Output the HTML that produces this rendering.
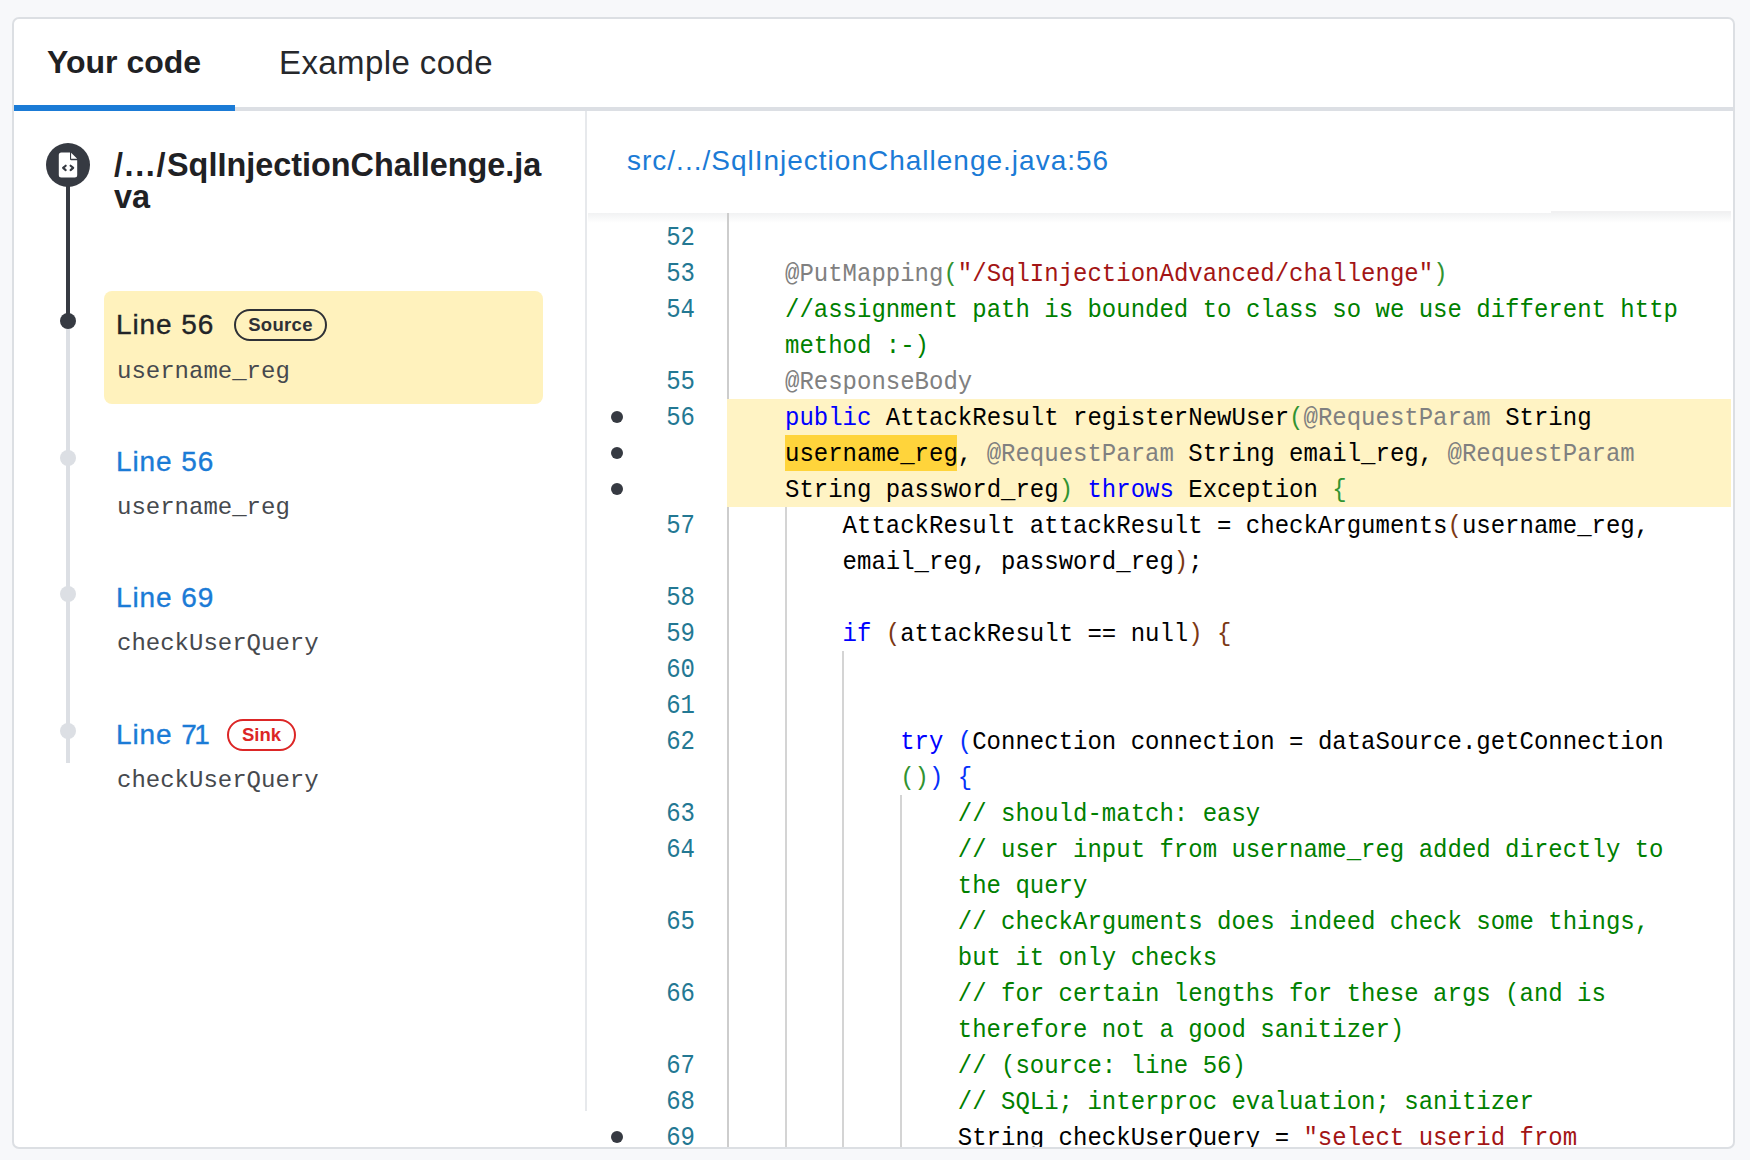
<!DOCTYPE html>
<html><head><meta charset="utf-8">
<style>
html,body{margin:0;padding:0;}
body{width:1750px;height:1160px;background:#f7f8fa;position:relative;overflow:hidden;font-family:"Liberation Sans",sans-serif;}
.card{position:absolute;left:12px;top:17px;width:1719px;height:1128px;border:2px solid #dcdfe3;border-radius:7px;background:#fff;overflow:hidden;}
.abs{position:absolute;white-space:pre;}
.tab1{left:33px;top:23px;font-size:32px;font-weight:700;color:#1f2124;line-height:40px;}
.tab2{left:265px;top:24px;font-size:33px;letter-spacing:0.4px;font-weight:400;color:#26282c;line-height:40px;}
.tabline{left:0;top:88px;width:1719px;height:4px;background:#dcdfe4;}
.tabact{left:0;top:86px;width:221px;height:6px;background:#1b7bd6;}
.divl{left:571px;top:92px;width:2px;height:1000px;background:#e7e9ec;}
.mono{font-family:"Liberation Mono",monospace;}
.ficon{left:32px;top:124px;width:44px;height:44px;border-radius:50%;background:#363a42;}
.vdark{left:52px;top:160px;width:4px;height:142px;background:#363a42;}
.vlight{left:52px;top:302px;width:4px;height:442px;background:#dcdfe4;}
.tdot{left:46px;width:16px;height:16px;border-radius:50%;}
.ftitle{left:100px;top:131px;font-size:32.4px;font-weight:700;color:#1f2124;line-height:31.5px;}
.ycard{left:90px;top:272px;width:439px;height:113px;border-radius:8px;background:#fff2bd;}
.lnk{left:102px;margin-top:1px;font-size:28px;line-height:34px;letter-spacing:0.9px;color:#1b7bd6;-webkit-text-stroke:0.35px currentColor;}
.lnk.dark{color:#222428;}
.sub{left:103px;margin-top:2px;font-family:"Liberation Mono",monospace;font-size:24px;line-height:30px;color:#46494e;}
.badge{height:28px;border:2px solid #2e3136;border-radius:16px;font-size:18.5px;font-weight:700;line-height:28px;text-align:center;color:#2e3136;}
.badge.sink{border-color:#dc2626;color:#dc2626;}
.fhead{left:613px;top:125px;font-size:28px;line-height:34px;letter-spacing:1px;color:#1b7bd6;}
.hshadow{left:574px;top:194px;width:1143px;height:10px;background:linear-gradient(#f1f2f3,#ffffff);}
.gutline{left:713px;top:194px;width:2px;height:940px;background:#cdcdcd;}
.guide{width:2px;background:#d4d4d4;}
.hlrow{left:713px;top:380px;width:1004px;height:108px;background:#fff3c4;}
.ln{position:absolute;margin-top:1px;left:601px;width:80px;text-align:right;font-family:"Liberation Mono",monospace;font-size:24px;line-height:36px;color:#237893;transform:scaleY(1.12);transform-origin:0 18px;}
.gdot{position:absolute;left:597px;width:12px;height:12px;border-radius:50%;background:#363a42;}
.cl{position:absolute;white-space:pre;font-family:"Liberation Mono",monospace;font-size:24px;line-height:36px;color:#000;margin-top:2px;transform:scaleY(1.06);transform-origin:0 18px;}
.kw{color:#0000ff}.ann{color:#808080}.str{color:#a31515}.com{color:#008000}
.g{color:#319331}.br{color:#7b3814}.bl{color:#0431fa}
.hl{}
</style></head>
<body>
<div class="card">
  <div class="abs tab1">Your code</div>
  <div class="abs tab2">Example code</div>
  <div class="abs tabline"></div>
  <div class="abs tabact"></div>
  <div class="abs divl"></div>

  <div class="abs vdark"></div>
  <div class="abs vlight"></div>
  <div class="abs ficon">
    <svg width="44" height="44" viewBox="0 0 44 44" style="position:absolute;left:0;top:0">
      <path d="M15.3 9.6 H24 V15.9 Q24 17.2 25.3 17.2 H31.2 V31.9 A2.5 2.5 0 0 1 28.7 34.4 H15.3 A2.5 2.5 0 0 1 12.8 31.9 V12.1 A2.5 2.5 0 0 1 15.3 9.6 Z M25.1 9.7 L31.2 15.8 H25.1 Z" fill="#fff"/>
      <path d="M19.7 22.7 L17.1 24.9 L19.7 27.1 M24.6 22.7 L27.2 24.9 L24.6 27.1" stroke="#363a42" stroke-width="2.1" fill="none" stroke-linecap="round" stroke-linejoin="round"/>
    </svg>
  </div>
  <div class="abs tdot" style="top:294px;background:#363a42"></div>
  <div class="abs tdot" style="top:431px;background:#dcdfe4"></div>
  <div class="abs tdot" style="top:567px;background:#dcdfe4"></div>
  <div class="abs tdot" style="top:704px;background:#dcdfe4"></div>
  <div class="abs ftitle"><span style="letter-spacing:1.6px">/.../</span>SqlInjectionChallenge.ja
va</div>

  <div class="abs ycard"></div>
  <div class="abs lnk dark" style="top:288px">Line 56</div>
  <div class="abs badge" style="left:220px;top:290px;width:89px;letter-spacing:0.3px">Source</div>
  <div class="abs sub" style="top:336px">username_reg</div>

  <div class="abs lnk" style="top:425px">Line 56</div>
  <div class="abs sub" style="top:472px">username_reg</div>

  <div class="abs lnk" style="top:561px">Line 69</div>
  <div class="abs sub" style="top:608px">checkUserQuery</div>

  <div class="abs lnk" style="top:698px">Line <span style="letter-spacing:-2.5px">7</span><span style="letter-spacing:0">1</span></div>
  <div class="abs badge sink" style="left:213px;top:700px;width:65px">Sink</div>
  <div class="abs sub" style="top:745px">checkUserQuery</div>

  <div class="abs fhead">src/.../SqlInjectionChallenge.java:56</div>
  <div class="abs hshadow"></div>
  <div class="abs" style="left:1537px;top:192px;width:180px;height:2px;background:#f1f1f2"></div>
  <div class="abs gutline"></div>
  <div class="abs hlrow"></div>
  <div class="abs" style="left:771px;top:416px;width:172px;height:36px;background:#ffd43b"></div>
  <div class="abs guide" style="left:771px;top:488px;height:700px"></div>
  <div class="abs guide" style="left:828px;top:632px;height:600px"></div>
  <div class="abs guide" style="left:886px;top:776px;height:500px"></div>
<div class="ln" style="top:200px">52</div>
<div class="cl" style="top:200px;left:771.0px"></div>
<div class="ln" style="top:236px">53</div>
<div class="cl" style="top:236px;left:771.0px"><span class="ann">@PutMapping</span><span class="g">(</span><span class="str">&quot;/SqlInjectionAdvanced/challenge&quot;</span><span class="g">)</span></div>
<div class="ln" style="top:272px">54</div>
<div class="cl" style="top:272px;left:771.0px"><span class="com">//assignment path is bounded to class so we use different http</span></div>
<div class="ln" style="top:308px"></div>
<div class="cl" style="top:308px;left:771.0px"><span class="com">method :-)</span></div>
<div class="ln" style="top:344px">55</div>
<div class="cl" style="top:344px;left:771.0px"><span class="ann">@ResponseBody</span></div>
<div class="ln" style="top:380px">56</div>
<div class="gdot" style="top:392px"></div>
<div class="cl" style="top:380px;left:771.0px"><span class="kw">public</span><span class="t"> AttackResult registerNewUser</span><span class="g">(</span><span class="ann">@RequestParam</span><span class="t"> String</span></div>
<div class="ln" style="top:416px"></div>
<div class="gdot" style="top:428px"></div>
<div class="cl" style="top:416px;left:771.0px"><span class="hl">username_reg</span><span class="t">, </span><span class="ann">@RequestParam</span><span class="t"> String email_reg, </span><span class="ann">@RequestParam</span></div>
<div class="ln" style="top:452px"></div>
<div class="gdot" style="top:464px"></div>
<div class="cl" style="top:452px;left:771.0px"><span class="t">String password_reg</span><span class="g">)</span><span class="t"> </span><span class="kw">throws</span><span class="t"> Exception </span><span class="g">{</span></div>
<div class="ln" style="top:488px">57</div>
<div class="cl" style="top:488px;left:828.6px"><span class="t">AttackResult attackResult = checkArguments</span><span class="br">(</span><span class="t">username_reg,</span></div>
<div class="ln" style="top:524px"></div>
<div class="cl" style="top:524px;left:828.6px"><span class="t">email_reg, password_reg</span><span class="br">)</span><span class="t">;</span></div>
<div class="ln" style="top:560px">58</div>
<div class="cl" style="top:560px;left:771.0px"></div>
<div class="ln" style="top:596px">59</div>
<div class="cl" style="top:596px;left:828.6px"><span class="kw">if</span><span class="t"> </span><span class="br">(</span><span class="t">attackResult == null</span><span class="br">)</span><span class="t"> </span><span class="br">{</span></div>
<div class="ln" style="top:632px">60</div>
<div class="cl" style="top:632px;left:771.0px"></div>
<div class="ln" style="top:668px">61</div>
<div class="cl" style="top:668px;left:771.0px"></div>
<div class="ln" style="top:704px">62</div>
<div class="cl" style="top:704px;left:886.2px"><span class="kw">try</span><span class="t"> </span><span class="bl">(</span><span class="t">Connection connection = dataSource.getConnection</span></div>
<div class="ln" style="top:740px"></div>
<div class="cl" style="top:740px;left:886.2px"><span class="g">()</span><span class="bl">)</span><span class="t"> </span><span class="bl">{</span></div>
<div class="ln" style="top:776px">63</div>
<div class="cl" style="top:776px;left:943.8px"><span class="com">// should-match: easy</span></div>
<div class="ln" style="top:812px">64</div>
<div class="cl" style="top:812px;left:943.8px"><span class="com">// user input from username_reg added directly to</span></div>
<div class="ln" style="top:848px"></div>
<div class="cl" style="top:848px;left:943.8px"><span class="com">the query</span></div>
<div class="ln" style="top:884px">65</div>
<div class="cl" style="top:884px;left:943.8px"><span class="com">// checkArguments does indeed check some things,</span></div>
<div class="ln" style="top:920px"></div>
<div class="cl" style="top:920px;left:943.8px"><span class="com">but it only checks</span></div>
<div class="ln" style="top:956px">66</div>
<div class="cl" style="top:956px;left:943.8px"><span class="com">// for certain lengths for these args (and is</span></div>
<div class="ln" style="top:992px"></div>
<div class="cl" style="top:992px;left:943.8px"><span class="com">therefore not a good sanitizer)</span></div>
<div class="ln" style="top:1028px">67</div>
<div class="cl" style="top:1028px;left:943.8px"><span class="com">// (source: line 56)</span></div>
<div class="ln" style="top:1064px">68</div>
<div class="cl" style="top:1064px;left:943.8px"><span class="com">// SQLi; interproc evaluation; sanitizer</span></div>
<div class="ln" style="top:1100px">69</div>
<div class="gdot" style="top:1112px"></div>
<div class="cl" style="top:1100px;left:943.8px"><span class="t">String checkUserQuery = </span><span class="str">&quot;select userid from</span></div>
</div>
</body></html>
